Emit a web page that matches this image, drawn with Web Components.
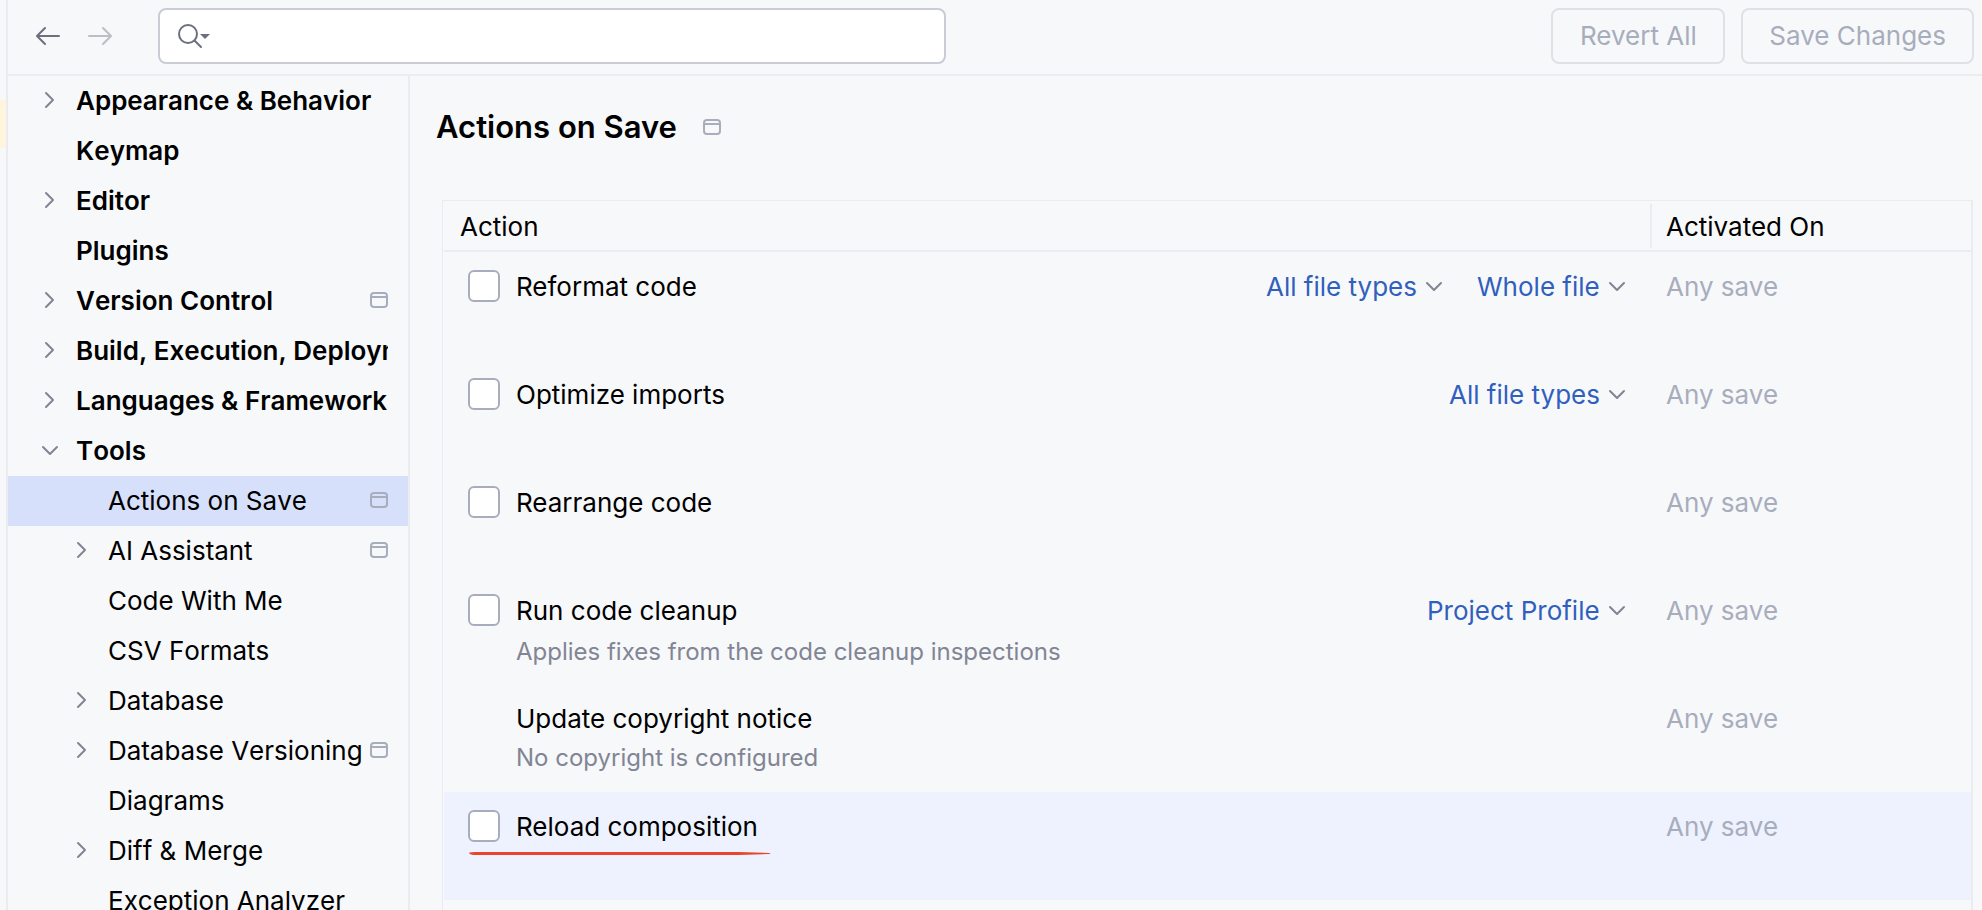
<!DOCTYPE html>
<html lang="en">
<head>
<meta charset="utf-8">
<title>Settings</title>
<style>
  html, body { height: 100%; margin: 0; }
  body {
    overflow: hidden;
    background: #f7f8fa;
    color: #000;
    font: 26px/32px Inter, "Liberation Sans", sans-serif;
    --line: #ebecf0;
    --muted: #a8adbd;
    --icon: #818594;
    --link: #315fbd;
  }
</style>
</head>
<body>
<settings-window>
  <settings-toolbar slot="toolbar"></settings-toolbar>
  <settings-tree slot="tree">
    <tree-item state="closed">Appearance &amp; Behavior</tree-item>
    <tree-item>Keymap</tree-item>
    <tree-item state="closed">Editor</tree-item>
    <tree-item>Plugins</tree-item>
    <tree-item state="closed" project>Version Control</tree-item>
    <tree-item state="closed">Build, Execution, Deployment</tree-item>
    <tree-item state="closed">Languages &amp; Frameworks</tree-item>
    <tree-item state="open">Tools</tree-item>
    <tree-item child selected project>Actions on Save</tree-item>
    <tree-item child state="closed" project>AI Assistant</tree-item>
    <tree-item child>Code With Me</tree-item>
    <tree-item child>CSV Formats</tree-item>
    <tree-item child state="closed">Database</tree-item>
    <tree-item child state="closed" project>Database Versioning</tree-item>
    <tree-item child>Diagrams</tree-item>
    <tree-item child state="closed">Diff &amp; Merge</tree-item>
    <tree-item child>Exception Analyzer</tree-item>
  </settings-tree>
  <settings-page heading="Actions on Save">
    <actions-table></actions-table>
  </settings-page>
</settings-window>

<script>
  const PROJECT_ICON = `
    <svg class="project" width="18" height="16" viewBox="0 0 18 16" fill="none" stroke="#a8adbd" stroke-width="2" aria-hidden="true">
      <rect x="1" y="1" width="16" height="14" rx="3"/><path d="M1 5h16"/>
    </svg>`;

  function define(name, render) {
    customElements.define(name, class extends HTMLElement {
      constructor() {
        super();
        this.attachShadow({ mode: "open" });
      }
      connectedCallback() {
        const template = document.createElement("template");
        template.innerHTML = render(this);
        this.shadowRoot.replaceChildren(template.content.cloneNode(true));
      }
    });
  }

  define("settings-window", () => `
    <style>
      :host { display: grid; grid-template: auto minmax(0, 1fr) / 6px 402px minmax(0, 1fr); height: 100vh; overflow: hidden; }
      .edge { grid-row: 1 / 3; padding-top: 100px; }
      .mark { height: 48px; background: #fff5dc; }
      .bar { grid-column: 2 / 4; border-left: 2px solid var(--line); border-bottom: 2px solid var(--line); }
      .side { border-left: 2px solid var(--line); border-right: 2px solid var(--line); min-width: 0; margin-right: -2px; overflow: hidden; }
      .main { min-width: 0; overflow: hidden; padding-left: 2px; }
    </style>
    <div class="edge"><div class="mark"></div></div>
    <div class="bar"><slot name="toolbar"></slot></div>
    <div class="side"><slot name="tree"></slot></div>
    <div class="main"><slot></slot></div>`);

  define("settings-toolbar", () => `
    <style>
      :host { display: flex; align-items: center; height: 56px; padding: 8px 8px 10px 24px; }
      button { font: inherit; background: none; cursor: default; }
      .nav { display: flex; gap: 20px; }
      .nav button { display: flex; width: 32px; height: 32px; padding: 0; border: 0; }
      .search { display: flex; align-items: center; box-sizing: border-box; flex: 0 1 788px; min-width: 0; height: 56px; margin-left: 42px;
        padding-left: 18px; gap: 12px; border: 2px solid #c9ccd6; border-radius: 8px; background: #fff; }
      .search svg { flex: none; }
      input { flex: 1; min-width: 0; height: 40px; padding: 0; border: 0; outline: 0; background: none; font: inherit; }
      .actions { display: flex; gap: 16px; margin-left: auto; }
      .actions button { height: 56px; min-width: 174px; padding: 0 26px; border: 2px solid #dfe1e5; border-radius: 8px; color: var(--muted); white-space: nowrap; }
    </style>
    <nav class="nav">
      <button aria-label="Back"><svg width="32" height="32" viewBox="0 0 32 32" fill="none" stroke="#6c707e" stroke-width="2" stroke-linecap="round" stroke-linejoin="round"><path d="M27 16H5M13 8l-8 8 8 8"/></svg></button>
      <button aria-label="Forward" disabled><svg width="32" height="32" viewBox="0 0 32 32" fill="none" stroke="#bdbec2" stroke-width="2" stroke-linecap="round" stroke-linejoin="round"><path d="M5 16h22M19 8l8 8-8 8"/></svg></button>
    </nav>
    <div class="search">
      <svg width="32" height="26" viewBox="0 0 32 26" fill="none" stroke="#6c707e" stroke-width="2" stroke-linecap="round" aria-hidden="true">
        <circle cx="10" cy="11" r="9"/><path d="M16.500 17.500L23 24"/><path d="M22 11h10l-5 5z" fill="#6c707e" stroke="none"/>
      </svg>
      <input type="text" aria-label="Search settings">
    </div>
    <div class="actions"><button disabled>Revert All</button><button disabled>Save Changes</button></div>`);

  define("settings-tree", () => `
    <style>:host { display: block; }</style>
    <nav aria-label="Settings"><slot></slot></nav>`);

  const CHEVRONS = { closed: "M12 9l7 7-7 7", open: "M9 13l7 7 7-7" };

  define("tree-item", el => `
    <style>
      :host { display: block; font-weight: 600; font-kerning: none; }
      :host([child]) { font-weight: 400; }
      :host([selected]) { background: #d6e0fb; }
      a { display: flex; align-items: center; box-sizing: border-box; height: 50px; padding: 0 20px 2px 26px; color: inherit; text-decoration: none; }
      :host([child]) a { padding-left: 58px; }
      .toggle { flex: none; width: 32px; height: 32px; margin-right: 10px; }
      .label { flex: 1; min-width: 0; overflow: hidden; white-space: nowrap; padding-top: 2px; }
      .project { flex: none; margin-left: 6px; }
    </style>
    <a href="#">
      <svg class="toggle" viewBox="0 0 32 32" fill="none" stroke="#818594" stroke-width="2" stroke-linecap="round" stroke-linejoin="round" aria-hidden="true"><path d="${CHEVRONS[el.getAttribute("state")] || ""}"/></svg>
      <span class="label"><slot></slot></span>
      ${el.hasAttribute("project") ? PROJECT_ICON : ""}
    </a>`);

  define("settings-page", el => `
    <style>
      :host { display: flex; flex-direction: column; box-sizing: border-box; height: 100%; padding: 31px 9px 0 26px; }
      header { display: flex; align-items: center; gap: 26px; height: 40px; margin-bottom: 53px; }
      h1 { margin: 0; font-size: 31px; line-height: 40px; font-weight: 600; }
      .body { display: flex; flex: 1; flex-direction: column; padding-left: 6px; }
    </style>
    <header><h1>${el.getAttribute("heading")}</h1>${PROJECT_ICON}</header>
    <div class="body"><slot></slot></div>`);

  define("link-select", el => `
    <style>
      :host { display: flex; align-items: center; gap: 8px; }
      select { appearance: none; margin: 0; padding: 0; border: 0; outline: 0; height: 32px; background: none; color: var(--link); font: inherit; }
      svg { flex: none; }
    </style>
    <select aria-label="${el.getAttribute("label")}"><option>${el.getAttribute("value")}</option></select>
    <svg width="18" height="32" viewBox="0 0 18 32" fill="none" stroke="#818594" stroke-width="2" stroke-linecap="round" stroke-linejoin="round" aria-hidden="true"><path d="M2 12l7 7 7-7"/></svg>`);

  define("action-cell", el => {
    const fixed = el.hasAttribute("fixed");
    const note = el.getAttribute("note");
    const mark = el.hasAttribute("marked");
    return `
    <style>
      :host { display: flex; align-items: flex-start; justify-content: space-between; padding: 18px 24px 0 24px; }
      .text { position: relative; display: grid; grid-template-columns: 32px auto; column-gap: 16px; }
      input { appearance: none; box-sizing: border-box; width: 32px; height: 32px; margin: 0 0 2px; border: 2px solid #a8adbd; border-radius: 6px; background: #fff; }
      label, .title { grid-column: 2; height: 32px; padding-top: 1px; white-space: nowrap; box-sizing: border-box; }
      .note { grid-column: 2; padding-top: 9px; font-size: 24px; line-height: 30px; color: #818594; }
      .options { display: flex; gap: 34px; padding-top: 1px; }
      .mark { position: absolute; left: 0; top: 42px; }
    </style>
    <div class="text">
      ${fixed ? `<span class="title">${el.getAttribute("label")}</span>`
              : `<input type="checkbox" id="on"><label for="on">${el.getAttribute("label")}</label>`}
      ${note ? `<span class="note">${note}</span>` : ""}
      ${mark ? `<svg class="mark" width="304" height="4" viewBox="0 0 304 4" aria-hidden="true"><path d="M1 1Q2 0 8 0H270L301 1Q304 2 301 2L270 3H8Q2 3 1 1z" fill="#e8452c"/></svg>` : ""}
    </div>
    <div class="options"><slot></slot></div>`;
  });

  define("actions-table", () => `
    <style>
      :host { display: block; flex: 1; box-sizing: border-box; border: solid var(--line); border-width: 1px 2px 0 1px; padding-left: 1px; }
      table { width: 100%; table-layout: fixed; border-collapse: separate; border-spacing: 0; }
      th { box-sizing: border-box; height: 51px; padding: 2px 16px 0; border-bottom: 2px solid var(--line); text-align: left; font-weight: 400;
        background: linear-gradient(var(--line), var(--line)) left 3px / 2px 44px no-repeat; }
      th:first-child { background: none; }
      .when { width: 321px; box-sizing: border-box; }
      td { height: 108px; padding: 0; vertical-align: top; }
      td:last-child { box-sizing: border-box; padding: 19px 16px 0; color: var(--muted); }
      .hover { background: #edf2fe; }
    </style>
    <table>
      <thead><tr><th scope="col">Action</th><th scope="col" class="when">Activated On</th></tr></thead>
      <tbody>
        <tr><td><action-cell label="Reformat code"><link-select label="File types" value="All file types"></link-select><link-select label="Scope" value="Whole file"></link-select></action-cell></td><td>Any save</td></tr>
        <tr><td><action-cell label="Optimize imports"><link-select label="File types" value="All file types"></link-select></action-cell></td><td>Any save</td></tr>
        <tr><td><action-cell label="Rearrange code"></action-cell></td><td>Any save</td></tr>
        <tr><td><action-cell label="Run code cleanup" note="Applies fixes from the code cleanup inspections"><link-select label="Profile" value="Project Profile"></link-select></action-cell></td><td>Any save</td></tr>
        <tr><td><action-cell fixed label="Update copyright notice" note="No copyright is configured"></action-cell></td><td>Any save</td></tr>
        <tr class="hover"><td><action-cell marked label="Reload composition"></action-cell></td><td>Any save</td></tr>
      </tbody>
    </table>`);
</script>
</body>
</html>
